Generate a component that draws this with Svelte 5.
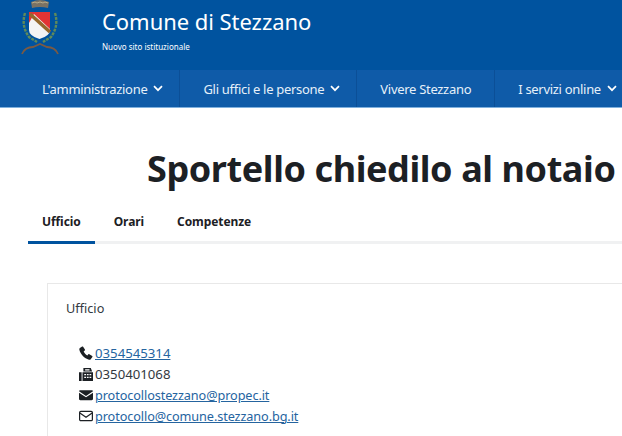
<script>
  const nav = [
    { label: "L'amministrazione", caret: true, cls: 'n1' },
    { label: 'Gli uffici e le persone', caret: true, cls: 'n2' },
    { label: 'Vivere Stezzano', caret: false, cls: 'n3' },
    { label: 'I servizi online', caret: true, cls: 'n4' }
  ];
  const tabs = ['Ufficio', 'Orari', 'Competenze'];
</script>

<div class="page">
  <header class="top">
    <svg class="logo" viewBox="0 0 40 56" width="40" height="56" aria-hidden="true">
      <path d="M11 2q9-4 18 0l-1 6q-8-2-16 0z" fill="#7b7264"/>
      <path d="M12 3l3-1 2 1 3-1 3 1 2-1 3 1" fill="none" stroke="#b5ab8c" stroke-width="1"/>
      <path d="M5 13q-4 13 4 24l8 5M35 13q4 13-4 24l-8 5" fill="none" stroke="#5f8a5a" stroke-width="2.400" stroke-dasharray="3 1"/>
      <path d="M9 12h21v18q0 6-10.500 9Q9 36 9 30z" fill="#f4f4f4"/>
      <path d="M9 12h21v17L14 14 9 23z" fill="#e23434"/>
      <path d="M10 14l20 18" stroke="#96682c" stroke-width="3.600"/>
      <path d="M2 54q3-7 11-7l7-3 7 3q8 0 11 7" fill="none" stroke="#7a5a44" stroke-width="1.800"/>
    </svg>
    <div class="brand">
      <div class="name">Comune di Stezzano</div>
      <div class="tag">Nuovo sito istituzionale</div>
    </div>
  </header>

  <nav class="menu">
    {#each nav as item}
      <div class="item {item.cls}">
        <span>{item.label}</span>
        {#if item.caret}
          <svg class="caret" viewBox="0 0 10 7" width="10" height="7" aria-hidden="true"><path d="M1 1.200l4 4 4-4" fill="none" stroke="#fff" stroke-width="1.700"/></svg>
        {/if}
      </div>
    {/each}
  </nav>

  <main class="content">
    <h1>Sportello chiedilo al notaio</h1>

    <div class="tabs">
      {#each tabs as t, i}
        <div class="tab" class:active={i === 0}>{t}</div>
      {/each}
    </div>

    <section class="card">
      <div class="label">Ufficio</div>
      <ul class="contacts">
        <li>
          <svg viewBox="0 0 16 16" width="14" height="14" aria-hidden="true"><path d="M3.600.6 1 2.200C.4 2.700.2 3.400.4 4.300c1.300 5.300 5.700 10 11 11.300.8.200 1.500 0 2-.6l1.900-2.500c.3-.4.200-.9-.2-1.200l-3.300-2c-.4-.2-.8-.2-1.100.1L9.500 10.800C7.800 10 6 8 5.300 6.400L6.600 5.100c.3-.3.400-.7.200-1.100L4.700.9C4.400.5 4 .4 3.600.6z" fill="#1c2024"/></svg>
          <a class="num" href="#t">0354545314</a>
        </li>
        <li>
          <svg viewBox="0 0 16 16" width="14" height="14" aria-hidden="true"><path d="M0 6h3v10H0zM4 6h12v10H4zM5 1h8.500L15 5H5z" fill="#1c2024"/><path d="M6 8h2v1.500H6zM9 8h2v1.500H9zM12 8h2v1.500h-2zM6 11h2v1.500H6zM9 11h2v1.500H9zM12 11h2v1.500h-2zM7 2.500h5v1.500H7z" fill="#fff"/></svg>
          <span class="num">0350401068</span>
        </li>
        <li>
          <svg viewBox="0 0 16 16" width="14" height="14" aria-hidden="true"><path d="M1.500 2.500h13c.8 0 1.500.6 1.500 1.300L8 9 0 3.800c0-.7.700-1.300 1.500-1.300zM0 5.500l8 5.200 8-5.200v7.200c0 .7-.7 1.300-1.500 1.300h-13C.7 14 0 13.400 0 12.700z" fill="#1c2024"/></svg>
          <a href="#m">protocollostezzano@propec.it</a>
        </li>
        <li>
          <svg viewBox="0 0 16 16" width="14" height="14" aria-hidden="true"><rect x=".7" y="2.700" width="14.600" height="10.600" rx="1.400" fill="none" stroke="#1c2024" stroke-width="1.400"/><path d="M1 4.500 8 9.500l7-5" fill="none" stroke="#1c2024" stroke-width="1.400"/></svg>
          <a href="#e">protocollo@comune.stezzano.bg.it</a>
        </li>
      </ul>
    </section>
  </main>
</div>

<style>
  :global(body) { margin: 0; background: #fff; }
  .page { width: 622px; height: 436px; overflow: hidden; font-family: "Noto Sans", sans-serif; }
  .top { height: 70px; background: #00539f; display: flex; color: #fff; }
  .logo { margin-left: 20px; flex: none; }
  .brand { margin-left: 42px; }
  .name { font-size: 22px; letter-spacing: -0.05px; line-height: 30px; margin-top: 6px; }
  .tag { font-size: 8px; line-height: 12px; margin-top: 5px; }
  .menu { height: 37px; background: #0f5ba8; display: flex; padding-left: 19px; border-bottom: 1px solid #7fb0dd; color: #e6f0f9; font-size: 13px; letter-spacing: -0.3px; white-space: nowrap; }
  .item { display: flex; align-items: center; gap: 6px; flex: none; padding: 0 16px 0 23px; border-right: 1px solid #0b4f97; }
  .n3 { padding-right: 23px; }
  .n4 { border-right: 0; }
  h1 { margin: 0; padding: 36px 0 0 147px; font-size: 36px; letter-spacing: -0.41px; line-height: 50px; font-weight: 700; color: #1c2024; white-space: nowrap; }
  .tabs { margin: 19px 0 0 28px; display: flex; gap: 5px; border-bottom: 3px solid #f0f1f2; color: #1c2024; font-weight: 700; font-size: 12px; letter-spacing: -0.08px; }
  .tab { padding: 0 14px 11px; line-height: 17px; margin-bottom: -3px; border-bottom: 3px solid transparent; }
  .tab.active { border-bottom-color: #00539f; }
  .card { margin: 39px 0 0 47px; border: 1px solid #e8e8e8; border-right: 0; padding: 15px 0 0 18px; color: #33393f; font-size: 12.700px; height: 200px; }
  .label { line-height: 18px; }
  .contacts { list-style: none; margin: 26px 0 0 13px; padding: 0; letter-spacing: -0.1px; }
  .contacts li { display: flex; align-items: center; gap: 2px; height: 20.800px; }
  .num { font-size: 13.200px; letter-spacing: 0; }
  a { color: #25649f; text-decoration: underline; }
</style>
